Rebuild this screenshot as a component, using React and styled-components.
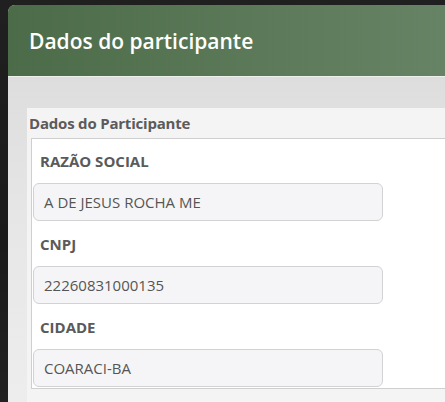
import styled, { createGlobalStyle } from 'styled-components';

const GlobalStyle = createGlobalStyle`
  html, body {
    margin: 0;
    padding: 0;
    background: #1c1c1c;
  }
  body {
    font-family: "Open Sans", "Liberation Sans", sans-serif;
  }
`;

const fields = [
  { label: 'RAZÃO SOCIAL', value: 'A DE JESUS ROCHA ME' },
  { label: 'CNPJ', value: '22260831000135' },
  { label: 'CIDADE', value: 'COARACI-BA' },
];

const App = () => (
  <>
    <GlobalStyle />
    <Backdrop>
      <Modal>
        <Header>
          <Title>Dados do participante</Title>
        </Header>
        <Body>
          <Panel>
            <PanelHeading>Dados do Participante</PanelHeading>
            <Box>
              {fields.map((f) => (
                <Field key={f.label}>
                  <Label>{f.label}</Label>
                  <Input>{f.value}</Input>
                </Field>
              ))}
            </Box>
          </Panel>
        </Body>
      </Modal>
    </Backdrop>
  </>
);

export default App;

const Backdrop = styled.div`
  width: 445px;
  height: 402px;
  overflow: hidden;
  padding: 5px 0 0 8px;
  box-sizing: border-box;
  background: linear-gradient(180deg, #202020 0%, #1a1a1a 60%, #222 100%);
`;

const Modal = styled.div`
  width: 600px;
  height: 420px;
  border-radius: 7px 0 0 0;
  overflow: hidden;
  background: linear-gradient(180deg, #d9d9d9 0%, #e6e6e6 50%, #eeeeee 100%);
`;

const Header = styled.div`
  height: 71px;
  display: flex;
  align-items: center;
  padding-left: 21px;
  border-bottom: 1px solid #eef0ec;
  background: linear-gradient(90deg, #4c6b48 0%, #5d7b5a 45%, #6f8b70 100%);
`;

const Title = styled.h4`
  margin: 0;
  color: #fff;
  font-size: 21px;
  font-weight: 600;
  letter-spacing: 0;
`;

const Body = styled.div`
  padding: 31px 0 0 19px;
`;

const Panel = styled.div`
  background: #f4f4f4;
  padding: 0 0 20px 0;
`;

const PanelHeading = styled.div`
  padding-left: 2px;
  line-height: 30px;
  font-size: 15px;
  font-weight: 700;
  letter-spacing: -0.2px;
  color: #5b5b5b;
`;

const Box = styled.div`
  margin-left: 4px;
  background: #fff;
  border: 1px solid #cfcfcf;
  border-right: none;
  padding: 12px 0 1px 0;
`;

const Field = styled.div`
  margin-bottom: 13px;
  &:last-child {
    margin-bottom: 0;
  }
`;

const Label = styled.div`
  padding-left: 8px;
  margin-bottom: 12px;
  line-height: 20px;
  font-size: 15px;
  font-weight: 700;
  color: #5a5a5a;
`;

const Input = styled.div`
  margin-left: 1px;
  width: 350px;
  height: 38px;
  box-sizing: border-box;
  padding: 0 10px;
  display: flex;
  align-items: center;
  border: 1px solid #d2d2d4;
  border-radius: 6px;
  background: #f5f5f7;
  font-size: 15px;
  color: #555;
`;
